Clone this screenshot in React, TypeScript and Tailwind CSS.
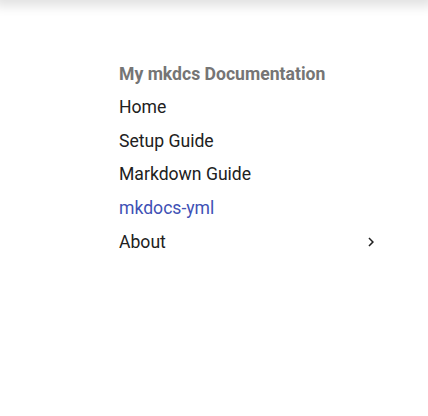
import React from "react";

const items = [
  { label: "Home" },
  { label: "Setup Guide" },
  { label: "Markdown Guide" },
  { label: "mkdocs-yml", active: true },
  { label: "About", nested: true },
];

const App = () => {
  return (
    <div className="relative h-[416px] w-[428px] overflow-hidden bg-white font-['Roboto',sans-serif]">
      <div className="absolute left-0 right-0 top-[-10px] h-[10px] shadow-[0_0_12px_6px_rgba(0,0,0,0.12)]" />
      <nav className="pl-[119px] pr-[50px] pt-[62px]">
        <div className="h-[24px] text-[17.6px] font-bold leading-[24px] text-[#757575]">
          My mkdcs Documentation
        </div>
        <ul className="mt-[4px] flex flex-col">
          {items.map((item) => (
            <li
              key={item.label}
              className={`flex h-[33.75px] items-center justify-between text-[17.6px] leading-[24px] ${
                item.active ? "text-[#4051b5]" : "text-[#212121]"
              }`}
            >
              <span>{item.label}</span>
              {item.nested && (
                <svg width="18" height="18" viewBox="0 0 24 24" className="mr-[-2px]">
                  <path
                    d="M8.59 16.58 13.17 12 8.59 7.41 10 6l6 6-6 6-1.41-1.42Z"
                    fill="#212121"
                  />
                </svg>
              )}
            </li>
          ))}
        </ul>
      </nav>
    </div>
  );
};

export default App;
